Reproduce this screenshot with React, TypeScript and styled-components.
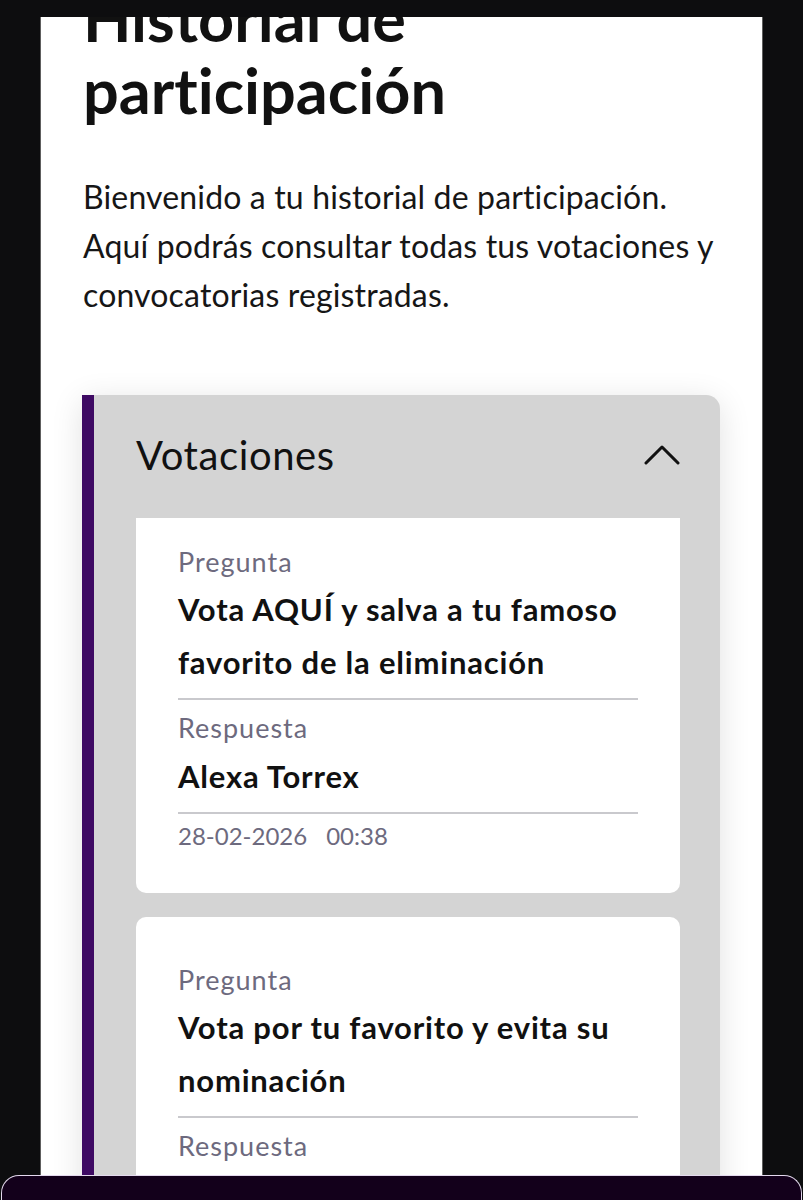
import React, { useLayoutEffect, useRef, useState } from 'react'
import styled, { createGlobalStyle } from 'styled-components'

const GlobalStyle = createGlobalStyle`
  html, body {
    margin: 0;
    padding: 0;
    background: #0d0d0f;
  }
  * {
    box-sizing: border-box;
  }
`

const Screen = styled('div')`
  position: relative;
  height: 100vh;
  display: flex;
  flex-direction: column;
  padding-top: 17px;
  overflow: hidden;
  font-family: Lato, 'Noto Sans', sans-serif;
  font-variant-ligatures: none;
`

const Sheet = styled('main')`
  flex: 1;
  margin: 0 40px;
  background: #fff;
  border-left: 1px solid #5e5e5e;
  border-right: 1px solid #5e5e5e;
  padding: 32px 42px 120px 41px;
  overflow-y: auto;
  scrollbar-width: none;
  &::-webkit-scrollbar {
    display: none;
  }
`

const Title = styled('h1')`
  margin: 0;
  font-size: 63px;
  line-height: 72px;
  font-weight: 700;
  color: #111;
  padding-left: 1px;
`

const Intro = styled('p')`
  margin: 46px 0 0;
  font-size: 32px;
  line-height: 49px;
  font-weight: 400;
  letter-spacing: 0.15px;
  color: #161616;
  padding-left: 1px;
`

const Accordion = styled('section')`
  margin-top: 76px;
  background: #d4d4d4;
  border-left: 12px solid #3e0a63;
  border-radius: 0 14px 14px 0;
  box-shadow: 0 6px 32px rgba(0, 0, 0, 0.12);
`

const AccordionHead = styled('button')`
  width: 100%;
  display: flex;
  align-items: center;
  justify-content: space-between;
  padding: 37px 40px 40px 42px;
  border: 0;
  background: transparent;
  font-family: inherit;
  font-variant-ligatures: none;
  cursor: pointer;
  text-align: left;
`

const AccordionTitle = styled('span')`
  font-size: 40px;
  line-height: 46px;
  font-weight: 400;
  letter-spacing: 0.6px;
  color: #111;
`

const List = styled('div')`
  max-height: 700px;
  padding: 0 40px 0 42px;
  overflow-y: auto;
  scrollbar-width: none;
  &::-webkit-scrollbar {
    display: none;
  }
`

const Entry = styled('article')`
  background: #fff;
  border-radius: 10px;
  padding: 45px 42px 40px;
  & + & {
    margin-top: 24px;
  }
`

const Label = styled('div')<{ $gap?: number }>`
  font-size: 27px;
  line-height: 36px;
  letter-spacing: 1px;
  color: #6d6a7e;
  margin-top: ${(p) => p.$gap ?? 0}px;
`

const Value = styled('div')<{ $gap?: number }>`
  font-size: 31px;
  line-height: 53px;
  font-weight: 700;
  letter-spacing: 0.8px;
  color: #111;
  margin-top: ${(p) => p.$gap ?? 0}px;
`

const Rule = styled('hr')<{ $gap?: number }>`
  border: 0;
  height: 2px;
  background: #c9c9cd;
  margin: ${(p) => p.$gap ?? 9}px 0 0;
`

const Stamp = styled('div')`
  display: flex;
  gap: 19px;
  margin-top: 5px;
  font-size: 24px;
  line-height: 34px;
  color: #6d6a7e;
`

const BottomBar = styled('div')`
  position: absolute;
  left: 1px;
  right: 1px;
  bottom: 0;
  height: 25px;
  background: #13001b;
  border: 1px solid #e4d9ee;
  border-bottom: 0;
  border-radius: 18px 18px 0 0;
`

const Chevron = ({ open }: { open: boolean }) => (
  <svg width="36" height="22" viewBox="0 0 36 22" fill="none">
    <polyline
      points={open ? '2,19 18,3 34,19' : '2,3 18,19 34,3'}
      stroke="#111"
      strokeWidth="3"
      strokeLinecap="round"
      strokeLinejoin="round"
    />
  </svg>
)

const votes = [
  {
    question: 'Vota AQUÍ y salva a tu famoso favorito de la eliminación',
    answer: 'Alexa Torrex',
    date: '28-02-2026',
    time: '00:38',
  },
  {
    question: 'Vota por tu favorito y evita su nominación',
    answer: 'Alexa Torrex',
    date: '27-02-2026',
    time: '23:51',
  },
]

const App = () => {
  const [open, setOpen] = useState(true)
  const sheetRef = useRef<HTMLElement>(null)
  const listRef = useRef<HTMLDivElement>(null)

  useLayoutEffect(() => {
    if (sheetRef.current) sheetRef.current.scrollTop = 67
    if (listRef.current) listRef.current.scrollTop = 19
  }, [])

  return (
    <>
      <GlobalStyle />
      <Screen>
        <Sheet ref={sheetRef}>
          <Title>
            Historial de
            <br />
            participación
          </Title>
          <Intro>
            Bienvenido a tu historial de participación. Aquí podrás consultar todas tus votaciones y
            convocatorias registradas.
          </Intro>
          <Accordion>
            <AccordionHead onClick={() => setOpen(!open)}>
              <AccordionTitle>Votaciones</AccordionTitle>
              <Chevron open={open} />
            </AccordionHead>
            {open && (
              <List ref={listRef}>
                {votes.map((v, i) => (
                  <Entry key={i}>
                    <Label>Pregunta</Label>
                    <Value $gap={3}>{v.question}</Value>
                    <Rule />
                    <Label $gap={10}>Respuesta</Label>
                    <Value $gap={4}>{v.answer}</Value>
                    <Rule />
                    <Stamp>
                      <span>{v.date}</span>
                      <span>{v.time}</span>
                    </Stamp>
                  </Entry>
                ))}
              </List>
            )}
          </Accordion>
        </Sheet>
        <BottomBar />
      </Screen>
    </>
  )
}

export default App
